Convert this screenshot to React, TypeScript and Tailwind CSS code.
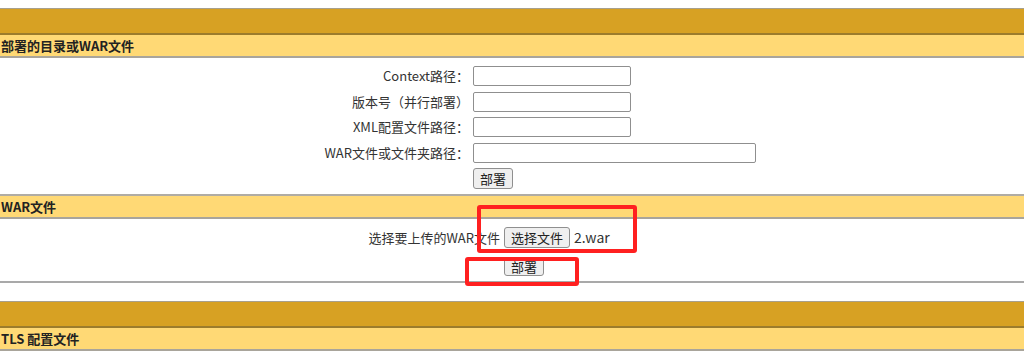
const font = { fontFamily: '"Noto Sans CJK SC", "Liberation Sans", sans-serif' };

const Band = () => (
  <div className="border-t border-[#a8a08c] bg-[#d7a123] h-[27px] border-b-2 border-b-[#9c7c2c]" />
);

const Heading = ({ title }: { title: string }) => (
  <div className="bg-[#ffd975] h-[23px] border-b-2 border-[#a9a59b] flex items-center pl-[1px] text-[13px] font-bold text-[#222]">
    {title}
  </div>
);

const Input = ({ w }: { w: string }) => (
  <input
    type="text"
    className={`${w} h-[20px] bg-white border border-[#8f8f8f] rounded-[2px]`}
  />
);

const Btn = ({ label, h = "h-[21px]" }: { label: string; h?: string }) => (
  <button
    className={`${h} px-[6px] bg-[#efefef] border border-[#8f8f8f] rounded-[3px] text-[13px] text-[#222] leading-[16px] flex items-center`}
  >
    {label}
  </button>
);

export default function App() {
  const rows = [
    { label: "Context路径：", w: "w-[158px]" },
    { label: "版本号（并行部署）", w: "w-[158px]" },
    { label: "XML配置文件路径：", w: "w-[158px]" },
    { label: "WAR文件或文件夹路径：", w: "w-[283px]" },
  ];

  return (
    <div className="relative w-[1024px] h-[355px] bg-white overflow-hidden text-[#333]" style={font}>
      <div className="h-[8px]" />
      <Band />
      <Heading title="部署的目录或WAR文件" />

      {/* server path form */}
      <div className="h-[136px] pt-[8px] flex flex-col gap-[5.5px] text-[13px]">
        {rows.map((r) => (
          <div key={r.label} className="flex items-center h-[20px]">
            <span className="w-[469px] text-right whitespace-nowrap">{r.label}</span>
            <span className="w-[4px]" />
            <Input w={r.w} />
          </div>
        ))}
        <div className="flex">
          <span className="w-[473px]" />
          <Btn label="部署" />
        </div>
      </div>

      <div className="border-t-2 border-[#b0aca4]" />
      <Heading title="WAR文件" />

      {/* upload form */}
      <div className="h-[64px] pt-[8px] flex flex-col gap-[10px] text-[13px] border-b-2 border-[#a9a9a9]">
        <div className="flex items-center">
          <span className="w-[500px] text-right whitespace-nowrap">选择要上传的WAR文件</span>
          <span className="w-[4px]" />
          <Btn label="选择文件" />
          <span className="ml-[4px] text-[14px]">2.war</span>
        </div>
        <div className="flex">
          <span className="w-[504px]" />
          <Btn label="部署" h="h-[18px]" />
        </div>
      </div>

      <div className="h-[18px]" />
      <Band />
      <Heading title="TLS 配置文件" />

      {/* annotations */}
      <div className="absolute left-[477px] top-[205px] w-[160px] h-[48px] border-4 border-[#ff2020] rounded-[3px]" />
      <div className="absolute left-[465px] top-[257px] w-[114px] h-[29px] border-4 border-[#ff2020] rounded-[3px]" />
    </div>
  );
}
